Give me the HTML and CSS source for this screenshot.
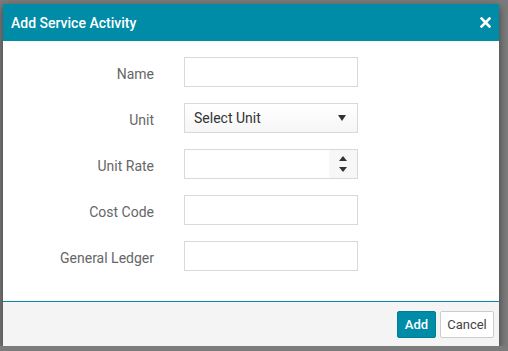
FILE: index.html
```html
<!DOCTYPE html>
<html lang="en">
<head>
    <meta charset="UTF-8">
    <title>Add Service Activity</title>
    <link rel="stylesheet" href="styles.css">
</head>
<body>

<div class="modal">
    <div class="modal-header">
        <span class="modal-title">Add Service Activity</span>
        <svg class="modal-close" width="11" height="11" viewBox="0 0 11 11">
            <path d="M1.5 1.5 L9.5 9.5 M9.5 1.5 L1.5 9.5" stroke="#fff" stroke-width="2.6" stroke-linecap="square"/>
        </svg>
    </div>

    <div class="modal-body">
        <div class="form-row">
            <label class="form-label">Name</label>
            <div class="field"></div>
        </div>
        <div class="form-row">
            <label class="form-label">Unit</label>
            <div class="field select">
                <span>Select Unit</span>
                <span class="caret"></span>
            </div>
        </div>
        <div class="form-row">
            <label class="form-label">Unit Rate</label>
            <div class="field number">
                <span class="spinner">
                    <span class="up"></span>
                    <span class="down"></span>
                </span>
            </div>
        </div>
        <div class="form-row">
            <label class="form-label">Cost Code</label>
            <div class="field"></div>
        </div>
        <div class="form-row">
            <label class="form-label">General Ledger</label>
            <div class="field"></div>
        </div>
    </div>

    <div class="modal-footer">
        <button class="btn btn-primary">Add</button>
        <button class="btn btn-default">Cancel</button>
    </div>
</div>

</body>
</html>
```

FILE: styles.css
```css
body {
    margin: 0;
    background: #7b7b7b;
    font-family: Roboto, 'Liberation Sans', sans-serif;
    font-size: 14px;
    color: #333;
}

.modal {
    margin: 4px 0 0 3px;
    width: 496px;
    height: 342px;
    background: #fff;
    box-shadow: 0 3px 8px rgba(0, 0, 0, 0.5);
    display: flex;
    flex-direction: column;
}

.modal-header {
    height: 37px;
    background: #008ca7;
    color: #fff;
    display: flex;
    align-items: center;
    justify-content: space-between;
    padding: 0 8px 0 8px;
}

.modal-title {
    font-size: 14px;
    font-weight: 500;
}

.modal-close {
    display: block;
    margin-right: 0;
}

.modal-body {
    flex: 1;
    padding-top: 16px;
    display: flex;
    flex-direction: column;
    gap: 16px;
}

.form-row {
    display: flex;
    align-items: center;
    height: 30px;
}

.form-label {
    width: 151px;
    text-align: right;
    color: #666;
    margin-right: 30px;
    padding-top: 3px;
}

.field {
    width: 172px;
    height: 28px;
    border: 1px solid #d9d9d9;
    background: #fff;
    box-sizing: content-box;
    display: flex;
    align-items: center;
}

.select {
    background: linear-gradient(#fff, #f6f6f6);
    padding: 0;
    justify-content: space-between;
}

.select span:first-child {
    padding-left: 9px;
    color: #333;
}

.caret {
    width: 0;
    height: 0;
    border-left: 4px solid transparent;
    border-right: 4px solid transparent;
    border-top: 6px solid #333;
    margin-right: 11px;
}

.number {
    justify-content: flex-end;
}

.spinner {
    width: 28px;
    height: 28px;
    background: #f7f7f7;
    display: flex;
    flex-direction: column;
    align-items: center;
    justify-content: center;
    gap: 6px;
}

.spinner .up {
    border-left: 4px solid transparent;
    border-right: 4px solid transparent;
    border-bottom: 5px solid #333;
}

.spinner .down {
    border-left: 4px solid transparent;
    border-right: 4px solid transparent;
    border-top: 5px solid #333;
}

.modal-footer {
    height: 44px;
    border-top: 1px solid #008ca7;
    background: #f4f4f4;
    display: flex;
    align-items: center;
    justify-content: flex-end;
    padding-right: 5px;
    gap: 4px;
}

.btn {
    height: 27px;
    font-family: Roboto, 'Liberation Sans', sans-serif;
    font-size: 13px;
    border-radius: 2px;
    padding: 0;
    cursor: pointer;
}

.btn-primary {
    background: #008ca7;
    border: 1px solid #007d96;
    color: #fff;
    font-weight: 500;
    width: 39px;
}

.btn-default {
    background: #fff;
    border: 1px solid #ccc;
    color: #444;
    width: 54px;
}
```
